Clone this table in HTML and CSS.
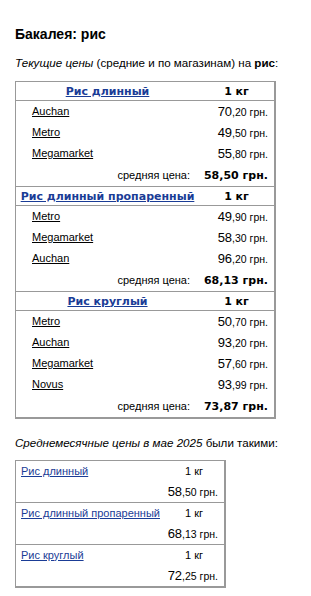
FILE: index.html
```html
<!DOCTYPE html>
<html lang="ru">
<head>
<meta charset="utf-8">
<title>Бакалея: рис</title>
<link rel="stylesheet" href="styles.css">
</head>
<body>
<h1 class="title">Бакалея: рис</h1>
<p class="intro"><i>Текущие цены</i> (средние и по магазинам) на <b>рис</b>:</p>

<table class="prices">
  <tbody>
    <tr class="head">
      <th class="c1"><a href="#" class="prod">Рис длинный</a></th>
      <th class="c2">1 кг</th>
    </tr>
    <tr><td class="store"><a href="#">Auchan</a></td><td class="price"><span class="big">70</span><span class="sm">,20 грн.</span></td></tr>
    <tr><td class="store"><a href="#">Metro</a></td><td class="price"><span class="big">49</span><span class="sm">,50 грн.</span></td></tr>
    <tr><td class="store"><a href="#">Megamarket</a></td><td class="price"><span class="big">55</span><span class="sm">,80 грн.</span></td></tr>
    <tr class="avg"><td class="avg-label">средняя цена:</td><td class="avg-price">58,50 грн.</td></tr>
  </tbody>
  <tbody>
    <tr class="head next">
      <th class="c1"><a href="#" class="prod">Рис длинный пропаренный</a></th>
      <th class="c2">1 кг</th>
    </tr>
    <tr><td class="store"><a href="#">Metro</a></td><td class="price"><span class="big">49</span><span class="sm">,90 грн.</span></td></tr>
    <tr><td class="store"><a href="#">Megamarket</a></td><td class="price"><span class="big">58</span><span class="sm">,30 грн.</span></td></tr>
    <tr><td class="store"><a href="#">Auchan</a></td><td class="price"><span class="big">96</span><span class="sm">,20 грн.</span></td></tr>
    <tr class="avg"><td class="avg-label">средняя цена:</td><td class="avg-price">68,13 грн.</td></tr>
  </tbody>
  <tbody>
    <tr class="head next">
      <th class="c1"><a href="#" class="prod">Рис круглый</a></th>
      <th class="c2">1 кг</th>
    </tr>
    <tr><td class="store"><a href="#">Metro</a></td><td class="price"><span class="big">50</span><span class="sm">,70 грн.</span></td></tr>
    <tr><td class="store"><a href="#">Auchan</a></td><td class="price"><span class="big">93</span><span class="sm">,20 грн.</span></td></tr>
    <tr><td class="store"><a href="#">Megamarket</a></td><td class="price"><span class="big">57</span><span class="sm">,60 грн.</span></td></tr>
    <tr><td class="store"><a href="#">Novus</a></td><td class="price"><span class="big">93</span><span class="sm">,99 грн.</span></td></tr>
    <tr class="avg"><td class="avg-label">средняя цена:</td><td class="avg-price">73,87 грн.</td></tr>
  </tbody>
</table>

<p class="month"><i>Среднемесячные цены в мае 2025</i> были такими:</p>

<table class="monthly">
  <tbody>
    <tr class="name-row"><td class="m1"><a href="#">Рис длинный</a></td><td class="m2">1 кг</td></tr>
    <tr class="price-row"><td colspan="2" class="mprice"><span class="big">58</span><span class="sm">,50 грн.</span></td></tr>
  </tbody>
  <tbody class="sep">
    <tr class="name-row"><td class="m1"><a href="#">Рис длинный пропаренный</a></td><td class="m2">1 кг</td></tr>
    <tr class="price-row"><td colspan="2" class="mprice"><span class="big">68</span><span class="sm">,13 грн.</span></td></tr>
  </tbody>
  <tbody class="sep">
    <tr class="name-row"><td class="m1"><a href="#">Рис круглый</a></td><td class="m2">1 кг</td></tr>
    <tr class="price-row"><td colspan="2" class="mprice"><span class="big">72</span><span class="sm">,25 грн.</span></td></tr>
  </tbody>
</table>
</body>
</html>
```
FILE: styles.css
```css
html, body {
  margin: 0;
  padding: 0;
  background: #fff;
}
body {
  padding: 0 15px;
  font-family: "Liberation Sans", Arial, sans-serif;
  font-size: 12px;
  color: #000;
}
.title {
  margin: 26px 0 0;
  font-size: 14px;
  line-height: 17px;
  font-weight: bold;
}
.intro {
  margin: 13px 0 0;
  font-size: 11.6px;
  line-height: 14px;
}
.intro b { font-weight: bold; }

table {
  border-collapse: separate;
  border-spacing: 0;
  border: 1px solid #999;
  border-right-width: 2px;
  border-bottom-width: 2px;
}
.prices {
  margin-top: 11px;
  width: 261px;
}
th, td {
  padding: 0;
  vertical-align: middle;
}
.head th {
  height: 18px;
  border-bottom: 1px solid #999;
  font-family: "DejaVu Sans", Verdana, sans-serif;
  font-size: 11px;
  font-weight: bold;
  text-align: center;
  line-height: 13px;
}
.head.next th {
  border-top: 1px solid #999;
}
.c1 { width: 183px; }
.c2 { width: 75px; }
a.prod {
  color: #1a3c96;
}
.prices td {
  height: 21px;
  line-height: 13px;
}
.prices .avg td {
  height: 22px;
}
.store {
  padding-left: 16px;
  font-size: 11px;
}
.store a {
  color: #000;
}
.price {
  text-align: right;
  padding-right: 6px;
  white-space: nowrap;
}
.big { font-size: 13px; }
.sm { font-size: 10.5px; }
.avg-label {
  text-align: right;
  padding-right: 9px;
  font-size: 11px;
}
.avg-price {
  text-align: right;
  padding-right: 6px;
  font-family: "DejaVu Sans", Verdana, sans-serif;
  font-size: 11px;
  font-weight: bold;
  white-space: nowrap;
}
.month {
  margin: 17px 0 0;
  font-size: 11.6px;
  line-height: 14px;
}
.monthly {
  margin-top: 10px;
  width: 211px;
}
.monthly td {
  font-size: 11px;
  line-height: 13px;
}
.name-row td { height: 20px; }
.price-row td { height: 21px; }
.sep tr:first-child td {
  border-top: 1px solid #999;
}
.m1 {
  width: 143px;
  padding-left: 5px;
}
.m1 a { color: #1a3c96; }
.m2 {
  width: 60px;
  text-align: center;
}
.mprice {
  text-align: right;
  padding-right: 6px;
  white-space: nowrap;
}
```
